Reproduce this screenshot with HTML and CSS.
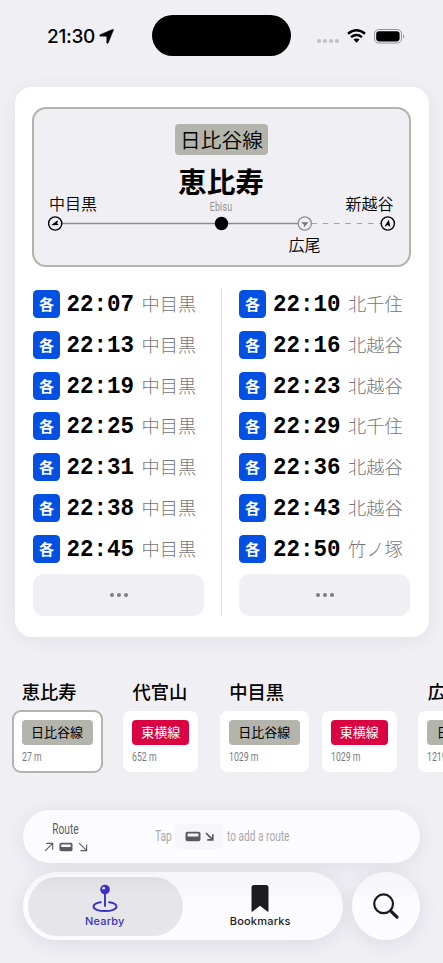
FILE: index.html
```html
<!DOCTYPE html>
<html lang="ja">
<head>
<meta charset="utf-8">
<title>恵比寿</title>
<link rel="stylesheet" href="styles.css">
</head>
<body>
<svg width="0" height="0" class="defs">
  <symbol id="train" viewBox="0 0 15 10"><path fill-rule="evenodd" d="M2.2 0.5h10.6a1.7 1.7 0 0 1 1.7 1.7v5.6a1.7 1.7 0 0 1-1.7 1.7H2.2a1.7 1.7 0 0 1-1.7-1.7V2.2A1.7 1.7 0 0 1 2.2 .5zM2.9 2.2a.5.5 0 0 0-.5.5v1.8a.5.5 0 0 0 .5.5h9.2a.5.5 0 0 0 .5-.5V2.7a.5.5 0 0 0-.5-.5z" fill="currentColor"/></symbol>
  <symbol id="down" viewBox="0 0 9 9"><path d="M1 1L7.8 7.8M7.8 2.2V7.8H2.2" fill="none" stroke="currentColor"/></symbol>
  <symbol id="up" viewBox="0 0 9 9"><path d="M1 8L7.8 1.2M2 1.2H7.8V7" fill="none" stroke="currentColor"/></symbol>
</svg>
<div class="status">
  <div class="clock"><span>21:30</span>
    <svg width="15" height="15" viewBox="0 0 15 15"><path d="M13.8.2Q14.8 0 14.5 1.1L9.2 13.9Q8.600 15 7.700 13.800V7.900Q7.700 7.300 7.100 7.300H1.100Q0 6.600.9 5.800Z" stroke="#000" stroke-width=".4"/></svg>
  </div>
  <div class="island"></div>
  <div class="signals">
    <i class="dots"><b></b><b></b><b></b><b></b></i>
    <svg class="wifi" width="19" height="14" viewBox="0 0 19 14"><g fill="none" stroke="#000" stroke-width="2.4"><path d="M1 4.8Q9.5-2.1 18 4.8"/><path d="M4 8.1Q9.5 3.8 15 8.1"/></g><path d="M6.5 10.6Q9.5 8.4 12.5 10.6L9.5 13.7z"/></svg>
    <svg width="31" height="15" viewBox="0 0 31 15"><rect x=".5" y=".5" width="27" height="13.6" rx="4.2" fill="none" stroke="#96969a"/><rect x="2.2" y="2.2" width="23.4" height="10.2" rx="2.8"/><path d="M29 5v4.4q1.2-.7 1.2-2.2T29 5" fill="#96969a"/></svg>
  </div>
</div>

<main class="card">
  <section class="line">
    <div class="line-badge">日比谷線</div>
    <h1>恵比寿</h1>
    <div class="roman nar">Ebisu</div>
    <svg class="map" width="375" height="50" viewBox="0 0 375 50">
      <path d="M28 17.5H264" stroke="#8c8c8e" stroke-width="1.3"/>
      <path d="M277.500 17.500H347" stroke="#a2a2a5" stroke-width="1.2" stroke-dasharray="5.500 5.800"/>
      <circle cx="187.500" cy="17.500" r="6.700"/>
      <g fill="#f0eff4"><circle cx="21.200" cy="17.500" r="6.600" stroke="#000" stroke-width="1.400"/><circle cx="270.800" cy="17.500" r="6.600" stroke="#8e8e92" stroke-width="1.300"/><circle cx="353.800" cy="17.500" r="6.600" stroke="#000" stroke-width="1.400"/></g>
      <path d="M17.600 18.700L23.500 14.600Q24.300 14.500 23.900 15.400L23 17.500 24.800 18.900 18 19.200z"/>
      <path d="M267.500 16.300L274.600 16.200 270.100 21.200Q269.700 20.600 269.900 18.500L267.500 17z" fill="#77777b"/>
      <path d="M354.800 13.800L356.400 21 353.800 19 351.200 20.400Q350.700 20 351.200 19.200z"/>
      <g class="map-names"><text x="15" y="4">中目黒</text><text x="311.500" y="4">新越谷</text><text x="254.500" y="44.500">広尾</text></g>
    </svg>
  </section>
  <section class="times">
    <div class="col">
      <div class="row"><b class="kind">各</b><time>22:07</time><span>中目黒</span></div>
      <div class="row"><b class="kind">各</b><time>22:13</time><span>中目黒</span></div>
      <div class="row"><b class="kind">各</b><time>22:19</time><span>中目黒</span></div>
      <div class="row"><b class="kind">各</b><time>22:25</time><span>中目黒</span></div>
      <div class="row"><b class="kind">各</b><time>22:31</time><span>中目黒</span></div>
      <div class="row"><b class="kind">各</b><time>22:38</time><span>中目黒</span></div>
      <div class="row"><b class="kind">各</b><time>22:45</time><span>中目黒</span></div>
      <div class="more"><i></i><i></i><i></i></div>
    </div>
    <div class="divider"></div>
    <div class="col">
      <div class="row"><b class="kind">各</b><time>22:10</time><span>北千住</span></div>
      <div class="row"><b class="kind">各</b><time>22:16</time><span>北越谷</span></div>
      <div class="row"><b class="kind">各</b><time>22:23</time><span>北越谷</span></div>
      <div class="row"><b class="kind">各</b><time>22:29</time><span>北千住</span></div>
      <div class="row"><b class="kind">各</b><time>22:36</time><span>北越谷</span></div>
      <div class="row"><b class="kind">各</b><time>22:43</time><span>北越谷</span></div>
      <div class="row"><b class="kind">各</b><time>22:50</time><span>竹ノ塚</span></div>
      <div class="more"><i></i><i></i><i></i></div>
    </div>
  </section>
</main>

<section class="stations">
  <div class="station"><h2>恵比寿</h2><div class="lines">
    <div class="stop selected"><div class="tag hibiya">日比谷線</div><div class="nar">27 m</div></div></div></div>
  <div class="station"><h2>代官山</h2><div class="lines">
    <div class="stop"><div class="tag toyoko">東横線</div><div class="nar">652 m</div></div></div></div>
  <div class="station"><h2>中目黒</h2><div class="lines">
    <div class="stop"><div class="tag hibiya">日比谷線</div><div class="nar">1029 m</div></div>
    <div class="stop"><div class="tag toyoko">東横線</div><div class="nar">1029 m</div></div></div></div>
  <div class="station"><h2>広尾</h2><div class="lines">
    <div class="stop"><div class="tag hibiya">日比谷線</div><div class="nar">1219 m</div></div></div></div>
</section>

<footer>
  <div class="route">
    <div class="route-label"><span class="nar">Route</span>
      <div class="icons"><svg width="10" height="10"><use href="#up"/></svg><svg width="14" height="10"><use href="#train"/></svg><svg width="10" height="10"><use href="#down"/></svg></div>
    </div>
    <div class="hint"><span class="nar tap">Tap</span><div class="key"><svg width="16" height="11"><use href="#train"/></svg><svg class="bold" width="9" height="9"><use href="#down"/></svg></div><span class="nar add">to add a route</span></div>
  </div>
  <nav>
    <div class="tabs">
      <div class="tab active">
        <svg width="26" height="29" viewBox="0 0 26 29"><g fill="none" stroke="currentColor" stroke-linecap="round"><path d="M13 9v13" stroke-width="1.900"/><path d="M8.800 18.200C4.200 18.900 1.500 20.500 1.500 22.600c0 2.700 5 4.500 11.500 4.500s11.500-1.800 11.500-4.500c0-2.100-2.700-3.700-7.300-4.400" stroke-width="2"/></g><circle cx="13" cy="5.500" r="4.800" fill="currentColor"/><circle cx="11.700" cy="4.200" r="1.400" fill="#dcdcf0"/></svg>
        <span>Nearby</span>
      </div>
      <div class="tab">
        <svg width="18" height="29" viewBox="0 0 18 29"><path d="M3 1h12q2.500 0 2.500 2.500v23q0 2-1.500.7L9 21.700l-7 5.500Q.5 28.500.5 26.500v-23Q.5 1 3 1z" fill="#1c1c1e"/></svg>
        <span>Bookmarks</span>
      </div>
    </div>
    <div class="search"><svg width="28" height="28" viewBox="0 0 28 28" fill="none" stroke="#1a1a1c"><circle cx="11.600" cy="11.800" r="9.400" stroke-width="2.200"/><path d="M18.600 18.800L25 25.200" stroke-width="3.200" stroke-linecap="round"/></svg></div>
  </nav>
</footer>
</body>
</html>
```
FILE: styles.css
```css
* { box-sizing: border-box; }
body {
  margin: 0;
  width: 443px;
  height: 963px;
  overflow: hidden;
  background: #f0eff4;
  color: #000;
  font-family: "Noto Sans CJK JP", sans-serif;
}
.defs { display: block; height: 0; }
h1, h2 { margin: 0; }
.nar {
  font-family: Roboto, sans-serif;
  transform: scaleX(.7);
  transform-origin: 0 50%;
  white-space: nowrap;
}

.status {
  display: grid;
  grid-template-columns: 152px 139px 152px;
  height: 87px;
  padding-top: 15px;
  align-items: start;
}
.clock { display: flex; align-items: center; height: 42px; padding-left: 47px; gap: 4px; font: 550 19px/42px Inter, sans-serif; letter-spacing: -.3px; }
.clock span { position: relative; top: 1px; }
.island { height: 41px; border-radius: 21px; background: #000; }
.signals { display: flex; align-items: center; height: 42px; padding-left: 26px; }
.dots { display: flex; gap: 2px; margin: 9px 8px 0 0; }
.dots b { width: 4px; height: 4px; border-radius: 50%; background: #bfbfc3; }
.wifi { margin-right: 8px; }

.card {
  width: 414px;
  height: 550px;
  margin-left: 15px;
  padding: 20px 18px 0 17px;
  border-radius: 17px;
  background: #fff;
  box-shadow: 0 3px 18px rgba(60, 60, 90, .07);
}
.line {
  display: flex;
  flex-direction: column;
  align-items: center;
  height: 160px;
  padding-top: 15px;
  border: 2px solid #b3b4ab;
  border-radius: 14px;
  background: #f0eff4;
}
.line-badge {
  height: 31px;
  width: 93px;
  border-radius: 4px;
  background: #b3b4ab;
  text-align: center;
  font-size: 20.7px;
  line-height: 30px;
  font-weight: 350;
}
h1 { margin: 9px 1px 0 0; font-size: 28.7px; line-height: 34px; font-weight: 700; }
.roman { height: 14px; margin-top: 2px; font-size: 12.500px; line-height: 14px; color: #929296; letter-spacing: .3px; transform-origin: 50% 50%; }
.map { display: block; flex: none; margin-top: -8px; overflow: visible; }
.map-names { font-family: "Noto Sans CJK JP", sans-serif; font-size: 16px; font-weight: 350; }

.times { display: flex; margin: 21px 0 0 1px; }
.col { display: flex; flex-direction: column; gap: 12.8px; width: 171px; padding-top: 2px; }
.divider { width: 1px; height: 328px; margin: 0 17px; background: #e3e3e7; }
.row { display: flex; align-items: center; height: 28px; }
.kind {
  width: 27px;
  height: 28px;
  margin-right: 6.500px;
  border-radius: 4.500px;
  background: #0450e2;
  color: #fff;
  text-align: center;
  font-size: 15px;
  line-height: 27px;
}
.col:last-child .kind { margin-right: 7px; }
time {
  width: 75px;
  font: 700 22.500px/28px "Liberation Mono", monospace;
  transform: translateY(1px) scaleY(1.08);
}
.row span { font-size: 18.200px; line-height: 26px; height: 28px; font-weight: 300; color: #76767a; }
.more { display: flex; align-items: center; justify-content: center; gap: 3px; height: 42.500px; margin-top: -2px; border-radius: 11px; background: #f0eff4; }
.more i { width: 4px; height: 4px; border-radius: 50%; background: #7e7e81; }

.stations { display: flex; gap: 21.700px; width: 443px; overflow: hidden; margin-top: 38px; padding: 1px 0 2px 12.500px; }
.station { flex: none; }
h2 { padding-left: 9.300px; font-size: 18.300px; line-height: 30px; font-weight: 500; }
.lines { display: flex; gap: 12.800px; margin-top: 5px; }
.stop { height: 61px; padding: 9px; border-radius: 8px; background: #fff; }
.station .nar { width: 50px; margin-top: 5px; font-size: 12.500px; line-height: 14px; color: #7b7b7f; }
.selected { outline: 2px solid #b3b4ab; outline-offset: -1px; }
.tag { height: 25px; border-radius: 4px; text-align: center; font-size: 13px; line-height: 24px; }
.hibiya { width: 71px; background: #b3b4ab; }
.toyoko { width: 57px; background: #da0442; color: #fff; }

footer { margin: 36px 23px 0; }
.route { display: flex; height: 53px; border-radius: 27px; background: #fcfbff; box-shadow: 0 3px 20px rgba(50, 50, 80, .09); }
.route-label { width: 85px; padding-top: 12px; text-align: center; color: #5c5c60; }
.route-label .nar { display: block; font-size: 14.500px; line-height: 16px; transform-origin: 50% 50%; }
.icons { display: flex; align-items: center; justify-content: center; gap: 5px; height: 17px; }
.hint { display: flex; align-items: center; padding-left: 47px; color: #a8a8ac; font-size: 14.500px; }
.tap { width: 20px; }
.key { display: flex; align-items: center; justify-content: center; gap: 4px; width: 48px; height: 25px; margin-right: 4px; border-radius: 5px; background: #f6f6f8; color: #5a5a5d; }
.bold { stroke-width: 1.700; }
nav { display: flex; justify-content: space-between; margin-top: 9px; }
.tabs, .search { height: 68px; border-radius: 34px; background: linear-gradient(#f6f6f8 0, #f9f9fb 24px, #fcfbff 26px); box-shadow: 0 3px 20px rgba(50, 50, 80, .1); }
.tabs { display: flex; width: 320px; padding: 4.500px; }
.tab { display: flex; flex-direction: column; align-items: center; width: 155.500px; height: 59px; padding-top: 7px; border-radius: 30px; color: #1c1c1e; }
.tab:last-child svg { margin-right: 1px; }
.tab span { margin: 1px 1px 0 0; font: 550 11px/15px Inter, sans-serif; letter-spacing: .2px; }
.active { background: linear-gradient(#dedee2, #e6e6ea 16px); color: #3b32c0; }
.search { display: flex; align-items: center; justify-content: center; width: 68px; }
```
